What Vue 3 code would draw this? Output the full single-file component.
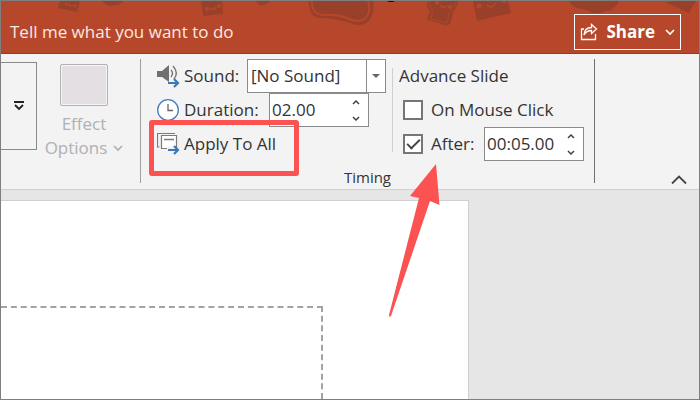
<script setup>
import { ref } from 'vue'

const sound = ref('[No Sound]')
const duration = ref('02.00')
const onClick = ref(false)
const after = ref(true)
const afterTime = ref('00:05.00')
</script>

<template>
  <div class="app">
    <header class="titlebar">
      <svg class="pattern" viewBox="0 0 698 52" preserveAspectRatio="xMinYMin slice" aria-hidden="true">
        <g fill="#99402a">
          <path d="M59 0H79L76 11 57 7Z" />
          <path d="M101 0H122Q119 5 113 4Q107 7 101 0Z" />
          <path d="M200 0H221L222 13 202 15Z" />
          <path d="M255 0H270Q264 5 258 4Z" />
          <path d="M307 0H372Q374 13 367 21Q359 27 349 22Q339 18 319 17Q309 16 308 5Z" />
          <path d="M427 0H457Q456 7 452 11Q451 18 449 23Q444 26 438 22L426 19Q426 14 429 10Q424 5 427 0Z" />
          <path d="M472 0H507L510 12 476 20Z" />
          <path d="M568 0H618Q614 10 604 10Q600 13 591 12Q586 8 579 8Q570 5 568 0Z" />
          <path d="M674 0H695L688 12 664 1Z" />
        </g>
        <path d="M311 0Q310 12 321 14Q337 13 348 18Q360 23 366 15Q370 10 367 0" fill="none" stroke="#b7472a" stroke-width="2" />
        <path d="M429 0Q427 4 431 8Q433 12 429 18L446 22Q447 17 448 12Q453 7 455 2" fill="none" stroke="#b7472a" stroke-width="0.7" />
        <g fill="#b7472a">
          <circle cx="65" cy="3" r="1.5" /><circle cx="74" cy="5" r="1.5" />
          <circle cx="206" cy="8" r="2" /><circle cx="218" cy="5" r="2" />
          <circle cx="436" cy="2" r="2" /><circle cx="449" cy="6" r="2" />
          <circle cx="478" cy="5" r="2.5" /><circle cx="503" cy="0" r="2" />
        </g>
        <g fill="none" stroke="#b7472a" stroke-width="1.5">
          <path d="M67 3Q69 6 72 4M209 7Q212 11 215 6M439 4Q442 8 446 5M486 4Q491 9 495 2" />
        </g>
        <path d="M386 0H394L392 1H388Z" fill="#111" />
      </svg>
      <a class="tell" href="#tell">Tell me what you want to do</a>
      <button class="share" type="button">
        <svg width="18" height="18" viewBox="0 0 18 18" fill="none" stroke="currentColor" stroke-width="1.3" aria-hidden="true">
          <path d="M4 6H1.500V16.500H15.500V11" />
          <path d="M4 12Q4.500 4.500 11.500 4.500V1.500L16.500 6 11.500 10.500V7.500Q6.500 7.500 4 12Z" />
        </svg>
        <span>Share</span>
        <svg width="10" height="8" viewBox="0 0 10 8" fill="none" stroke="currentColor" stroke-width="1.6" aria-hidden="true">
          <path d="M1 2 5 6 9 2" />
        </svg>
      </button>
    </header>

    <section class="ribbon">
      <button class="gallery-more" type="button" aria-label="More">
        <svg width="12" height="12" viewBox="0 0 12 12" fill="none" stroke="#222" aria-hidden="true">
          <path d="M1 2H11" stroke-width="2" />
          <path d="M2 5 6 9 10 5" stroke-width="1.8" />
        </svg>
      </button>
      <button class="effect" type="button" disabled>
        <span class="swatch"></span>
        <span>Effect</span>
        <span class="effect-line">Options
          <svg width="10" height="8" viewBox="0 0 10 8" fill="none" stroke="currentColor" stroke-width="1.7" aria-hidden="true">
            <path d="M1 2 5 6 9 2" />
          </svg>
        </span>
      </button>

      <div class="group">
        <div class="columns">
          <div class="transition">
            <div class="row">
              <svg class="icon" width="24" height="24" viewBox="0 0 24 24" fill="none" aria-hidden="true">
                <path d="M0 7H5L12 1V18L5 13H0Z" fill="#707070" />
                <path d="M14 6Q17 9 14 13M16 2Q22 9 17 15" stroke="#777" stroke-width="1.4" />
                <path d="M11 19H21M17 15 21 19 17 23" stroke="#3b78b8" stroke-width="2.2" />
              </svg>
              <label for="sound">Sound:</label>
              <span class="combo">
                <select id="sound" v-model="sound">
                  <option>[No Sound]</option>
                </select>
                <span class="drop"></span>
              </span>
            </div>
            <div class="row">
              <svg class="icon" width="24" height="24" viewBox="0 0 24 24" fill="none" aria-hidden="true">
                <circle cx="11" cy="12" r="10.300" fill="#fff" stroke="#477fbc" stroke-width="1.3" />
                <path d="M11 6V12.500H16" stroke="#666" stroke-width="1.3" />
              </svg>
              <label for="duration">Duration:</label>
              <span class="spin duration">
                <input id="duration" v-model="duration" type="text">
                <span class="steps">
                  <button type="button" aria-label="Increase duration"><svg width="8" height="5" viewBox="0 0 8 5"><path d="M1 4 4 1 7 4" /></svg></button>
                  <button type="button" aria-label="Decrease duration"><svg width="8" height="5" viewBox="0 0 8 5"><path d="M1 1 4 4 7 1" /></svg></button>
                </span>
              </span>
            </div>
            <button class="row apply" type="button">
              <svg class="icon" width="24" height="24" viewBox="0 0 24 24" fill="none" stroke="#7a7a7a" aria-hidden="true">
                <path d="M2.500 15H0.500V1.500H18" stroke-width="1.2" />
                <path d="M4.500 3.500H19.500V16.500H4.500Z" fill="#fff" stroke-width="1.2" />
                <path d="M7 7.500H17" stroke-width="1.5" />
                <path d="M10 14.500H17L22 17V24H10Z" fill="#f3f3f3" stroke="none" />
                <path d="M11 18H21M17 14 21 18 17 22" stroke="#3b78b8" stroke-width="2.2" />
              </svg>
              <span>Apply To All</span>
            </button>
            <span class="highlight" aria-hidden="true"></span>
          </div>

          <div class="advance">
            <div class="row">Advance Slide</div>
            <label class="row check">
              <input v-model="onClick" type="checkbox">
              <span>On Mouse Click</span>
            </label>
            <div class="row">
              <label class="check">
                <input v-model="after" type="checkbox">
                <span>After:</span>
              </label>
              <span class="spin after">
                <input v-model="afterTime" type="text" aria-label="After">
                <span class="steps">
                  <button type="button" aria-label="Increase time"><svg width="8" height="5" viewBox="0 0 8 5"><path d="M1 4 4 1 7 4" /></svg></button>
                  <button type="button" aria-label="Decrease time"><svg width="8" height="5" viewBox="0 0 8 5"><path d="M1 1 4 4 7 1" /></svg></button>
                </span>
              </span>
            </div>
          </div>
        </div>
        <div class="group-name">Timing</div>
      </div>

      <button class="collapse" type="button" aria-label="Collapse the Ribbon">
        <svg width="16" height="10" viewBox="0 0 16 10" fill="none" stroke="#444" stroke-width="1.8" aria-hidden="true">
          <path d="M1 8.500 8 1.500 15 8.500" />
        </svg>
      </button>
    </section>

    <main class="workspace">
      <div class="slide">
        <div class="placeholder"></div>
      </div>
      <svg class="arrow" width="54" height="156" viewBox="0 0 54 156" aria-hidden="true">
        <path d="M48 1 51.500 42 42 38 3 153Q1 155 1 152L31 35 22 33Z" fill="#fc5252" />
      </svg>
    </main>
  </div>
</template>

<style>
body {
  margin: 0;
}
</style>

<style scoped>
.app,
.app * {
  box-sizing: border-box;
}

.app {
  display: flex;
  flex-direction: column;
  min-height: 100vh;
  border: 1px solid #7f7f7f;
  font: 17px/24px "Open Sans", "Noto Sans", sans-serif;
  color: #333;
  background: #e6e6e6;
  overflow: hidden;
}

button,
input,
select {
  margin: 0;
  padding: 0;
  border: 0;
  border-radius: 0;
  background: none;
  font: inherit;
  color: inherit;
}

svg {
  display: block;
  flex: none;
}

.titlebar {
  position: relative;
  display: flex;
  align-items: center;
  justify-content: space-between;
  height: 53px;
  padding: 9px 18px 0 9px;
  background: #b7472a;
  border-bottom: 1px solid #a5361a;
  color: #fff;
}

.pattern {
  position: absolute;
  top: 0;
  left: 0;
  width: 100%;
  height: 52px;
}

.tell {
  position: relative;
  color: #fbe9e4;
  text-decoration: none;
}

.share {
  position: relative;
  display: flex;
  align-items: center;
  gap: 8px;
  height: 36px;
  padding: 0 5px;
  border: 1px solid #fff;
  background: #b7472a;
  font-weight: 700;
}

.share svg:last-child {
  margin-left: 2px;
}

.ribbon {
  display: flex;
  align-items: flex-start;
  height: 136px;
  padding-top: 5px;
  background: #f3f3f3;
  border-bottom: 1px solid #d0d0d0;
}

.gallery-more {
  display: flex;
  align-items: center;
  justify-content: center;
  width: 36px;
  height: 88px;
  margin-top: 3px;
  border: 1px solid #8a8a8a;
  border-left: 0;
}

.effect {
  display: flex;
  flex-direction: column;
  align-items: center;
  width: 94px;
  margin: 5px 9px 0 0;
  color: #b0b0b0;
}

.swatch {
  width: 48px;
  height: 42px;
  margin-bottom: 6px;
  border: 1px solid #b3b0b3;
  border-radius: 2px;
  background: #e3dfe3;
  box-shadow: inset 0 0 0 1px #f6f4f6;
}

.effect-line {
  display: flex;
  align-items: center;
  gap: 6px;
}

.group {
  height: 124px;
  border-left: 1px solid #a0a0a0;
  border-right: 1px solid #707070;
}

.columns {
  display: flex;
  height: 106px;
}

.transition {
  position: relative;
  width: 245px;
  padding-left: 16px;
}

.row {
  display: flex;
  align-items: center;
  height: 34px;
}

.icon {
  margin-right: 3px;
}

.combo {
  position: relative;
  width: 139px;
  height: 34px;
  margin-left: auto;
}

.combo select {
  appearance: none;
  width: 100%;
  height: 100%;
  padding-left: 3px;
  border: 1px solid #8a8a8a;
  background: #fff;
}

.drop {
  position: absolute;
  top: 1px;
  right: 1px;
  bottom: 1px;
  display: flex;
  align-items: center;
  justify-content: center;
  width: 19px;
  border-left: 1px solid #8a8a8a;
  pointer-events: none;
}

.drop::after {
  content: "";
  border: 4px solid transparent;
  border-top-color: #666;
  border-bottom: 0;
}

.spin {
  display: flex;
  width: 100px;
  height: 34px;
  border: 1px solid #8a8a8a;
  background: #fff;
}

.spin input {
  flex: 1;
  min-width: 0;
  padding-left: 2px;
}

.duration {
  margin: 0 17px 0 auto;
}

.steps {
  display: flex;
  flex-direction: column;
  justify-content: center;
  width: 24px;
}

.steps button {
  display: flex;
  align-items: center;
  justify-content: center;
  height: 16px;
}

.steps path {
  fill: none;
  stroke: #444;
  stroke-width: 1.5;
}

.highlight {
  position: absolute;
  left: 8px;
  top: 61px;
  width: 150px;
  height: 56px;
  border: 5px solid #fc5252;
  border-radius: 3px;
  pointer-events: none;
}

.advance {
  position: relative;
  width: 208px;
  padding-left: 13px;
}

.advance::before {
  content: "";
  position: absolute;
  left: 6px;
  top: 9px;
  bottom: 13px;
  border-left: 1px solid #cfcfcf;
}

.check {
  display: flex;
  align-items: center;
  gap: 8px;
  padding-left: 4px;
}

.check input {
  appearance: none;
  flex: none;
  display: flex;
  align-items: center;
  justify-content: center;
  width: 20px;
  height: 20px;
  border: 2px solid #767676;
  background: #fff;
}

.check input:checked::after {
  content: "";
  width: 11px;
  height: 5px;
  margin-bottom: 4px;
  border: solid #444;
  border-width: 0 0 2px 2px;
  transform: rotate(-45deg);
}

.after {
  margin: 0 10px 0 auto;
}

.group-name {
  height: 18px;
  font-size: 15px;
  line-height: 24px;
  text-align: center;
}

.collapse {
  align-self: flex-end;
  margin: 0 12px 4px auto;
}

.workspace {
  position: relative;
  display: flex;
  flex: 1;
  padding-top: 10px;
}

.slide {
  display: flex;
  width: 67%;
  padding-top: 105px;
  border: 1px solid #cfcfcf;
  border-width: 1px 1px 0 0;
  background: #fff;
}

.placeholder {
  width: 69%;
  min-height: 92px;
  border: 2px dashed #a3a3a3;
  border-width: 2px 2px 0 0;
}

.arrow {
  position: absolute;
  left: 387px;
  top: -27px;
  pointer-events: none;
}
</style>
